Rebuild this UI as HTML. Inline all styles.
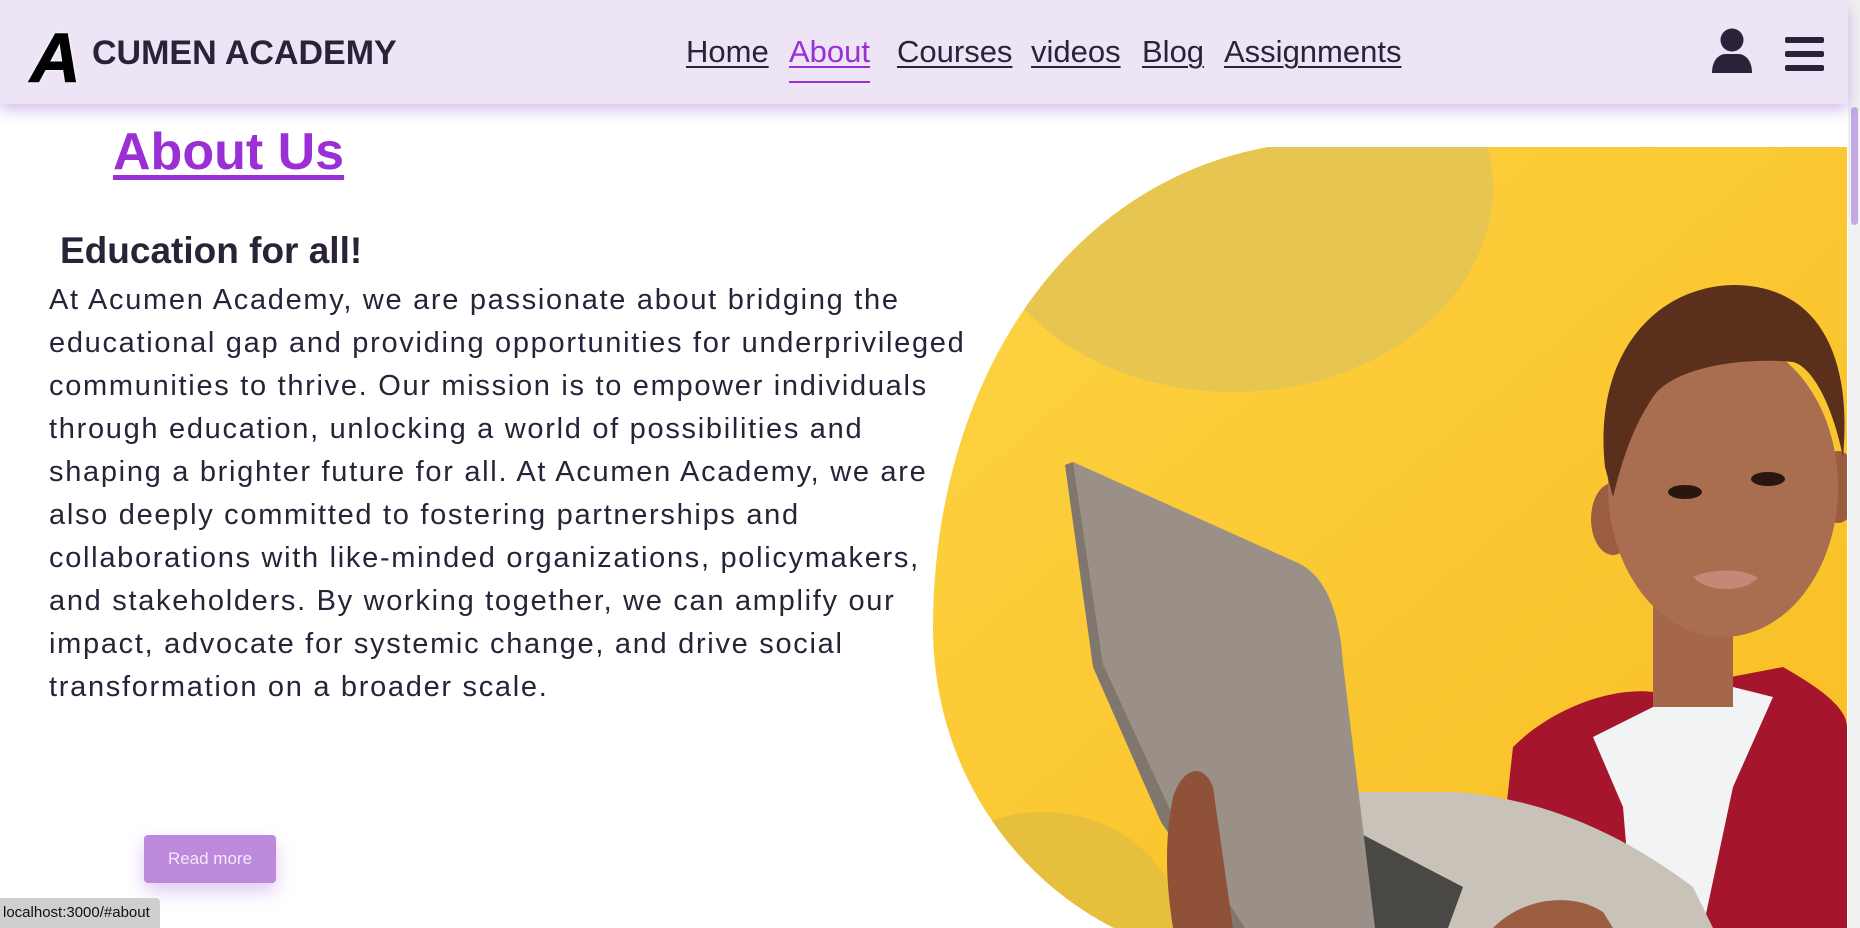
<!DOCTYPE html>
<html><head><meta charset="utf-8">
<style>
*{margin:0;padding:0;box-sizing:border-box}
html,body{width:1860px;height:928px;overflow:hidden;background:#fff;font-family:"Comic Sans MS","Liberation Sans",sans-serif;color:#2a2238}
.hdr{position:absolute;left:0;top:0;width:1848px;height:104px;background:#ede5f5;box-shadow:0 6px 14px rgba(160,110,220,.45);z-index:5}
.logoA{position:absolute;left:30px;top:18px;font-size:70px;font-weight:bold;color:#000;font-style:italic;-webkit-text-stroke:1px #000;text-shadow:0 0 3px #fff,0 0 3px #fff}
.brand{position:absolute;left:92px;top:34px;font-size:34px;font-weight:bold;color:#2a2238}
.nav a{position:absolute;top:34px;font-size:31px;color:#2a2238;text-decoration:underline;text-decoration-thickness:2px;text-underline-offset:4px}
.nav a.act{color:#9a2fd6;border-bottom:2px solid #9a2fd6;height:49px}
.sb{position:absolute;right:0;top:0;width:12px;height:928px;background:#f1f1f1}
.thumb{position:absolute;right:2px;top:107px;width:7px;height:118px;background:#c5a8e6;border-radius:4px}
h1{position:absolute;left:113px;top:122px;font-size:52px;color:#9a2fd6;text-decoration:underline;text-decoration-thickness:5px;text-underline-offset:6px;font-weight:bold}
h2{position:absolute;left:60px;top:230px;font-size:37px;font-weight:bold;color:#2a2238}
p.t{position:absolute;left:49px;top:279px;white-space:nowrap;font-size:29px;letter-spacing:1.7px;line-height:43px;color:#2a2238}
.btn{position:absolute;left:144px;top:835px;width:132px;height:48px;background:#bd8adb;border-radius:4px;color:#f3e8fb;font-size:17px;text-align:center;line-height:48px;box-shadow:0 8px 18px rgba(170,120,230,.4)}
.status{position:absolute;left:0;top:898px;width:160px;height:30px;background:#cfcfcf;border-top-right-radius:4px;font-family:"Liberation Sans",sans-serif;font-size:15px;line-height:30px;padding-left:3px;color:#111}
.img{position:absolute;left:933px;top:147px}
</style></head><body>
<div class="hdr">
  <div class="logoA">A</div>
  <div class="brand">CUMEN ACADEMY</div>
  <div class="nav">
    <a style="left:686px">Home</a>
    <a class="act" style="left:789px">About</a>
    <a style="left:897px">Courses</a>
    <a style="left:1031px">videos</a>
    <a style="left:1142px">Blog</a>
    <a style="left:1224px">Assignments</a>
  </div>
  <svg style="position:absolute;left:1705px;top:26px" width="130" height="52">
    <circle cx="27" cy="14" r="11.5" fill="#2a2238"/>
    <path d="M7 47 C7 34 14 28 21 28 L33 28 C40 28 47 34 47 47 Z" fill="#2a2238"/>
    <rect x="80" y="11" width="39" height="6" rx="2" fill="#2a2238"/>
    <rect x="80" y="25" width="39" height="6" rx="2" fill="#2a2238"/>
    <rect x="80" y="39" width="39" height="6" rx="2" fill="#2a2238"/>
  </svg>
</div>
<div class="sb"><div class="thumb"></div></div>
<h1>About Us</h1>
<h2>Education for all!</h2>
<p class="t">At Acumen Academy, we are passionate about bridging the<br>educational gap and providing opportunities for underprivileged<br>communities to thrive. Our mission is to empower individuals<br>through education, unlocking a world of possibilities and<br>shaping a brighter future for all. At Acumen Academy, we are<br>also deeply committed to fostering partnerships and<br>collaborations with like-minded organizations, policymakers,<br>and stakeholders. By working together, we can amplify our<br>impact, advocate for systemic change, and drive social<br>transformation on a broader scale.</p>
<div class="btn">Read more</div>
<svg class="img" width="914" height="781" viewBox="0 0 914 781">
  <defs>
    <clipPath id="c"><path d="M335,0 L914,0 L914,781 L181,781 C80,730 0,620 0,480 C0,250 120,40 335,0 Z"/></clipPath>
    <linearGradient id="y" x1="0" y1="0" x2="1" y2="1"><stop offset="0" stop-color="#fdd444"/><stop offset="1" stop-color="#f9bd22"/></linearGradient>
  </defs>
  <g clip-path="url(#c)">
    <rect width="914" height="781" fill="url(#y)"/>
    <ellipse cx="300" cy="40" rx="260" ry="205" fill="#e6c550"/>
    <ellipse cx="110" cy="790" rx="140" ry="125" fill="#e6bf3c"/>
    <path d="M560,781 L580,600 C620,560 680,540 720,545 L850,520 C885,540 914,560 914,580 L914,781 Z" fill="#a5152c"/>
    <path d="M660,590 L720,560 L800,540 L840,550 L800,640 L770,781 L700,781 L690,660 Z" fill="#f2f3f5"/>
    <rect x="720" y="440" width="80" height="120" fill="#a4674a"/>
    <ellipse cx="680" cy="372" rx="22" ry="36" fill="#9a5d40"/>
    <ellipse cx="905" cy="340" rx="20" ry="36" fill="#9a5d40"/>
    <ellipse cx="790" cy="340" rx="115" ry="150" fill="#a96d50"/>
    <path d="M672,320 C660,210 720,140 800,138 C880,138 920,200 910,310 C900,260 880,220 860,215 C810,210 740,220 720,250 C700,280 690,310 680,350 Z" fill="#5a2f1c"/>
    <ellipse cx="752" cy="345" rx="17" ry="7" fill="#2a1610"/>
    <ellipse cx="835" cy="332" rx="17" ry="7" fill="#2a1610"/>
    <path d="M760,430 C780,421 810,421 825,431 C810,446 775,446 760,430 Z" fill="#c48878"/>
    <path d="M380,781 L410,645 L520,645 C600,650 680,680 760,740 L780,781 Z" fill="#c8c2b8"/>
    <path d="M395,781 L415,680 L530,740 L515,781 Z" fill="#4a4845"/>
    <path d="M140,315 L365,416 C395,430 407,470 410,517 L442,781 L312,781 L241,671 L170,517 Z" fill="#9a9088"/>
    <path d="M140,315 L170,517 L241,671 L312,781 L300,781 L228,675 L160,520 L132,318 Z" fill="#7e766f"/>
    <path d="M240,650 C250,620 270,615 280,640 L300,781 L240,781 C232,730 232,690 240,650 Z" fill="#8f5238"/>
    <path d="M560,781 C590,750 640,745 670,765 L680,781 Z" fill="#9a5d40"/>
  </g>
</svg>
<div class="status">localhost:3000/#about</div>
</body></html>
